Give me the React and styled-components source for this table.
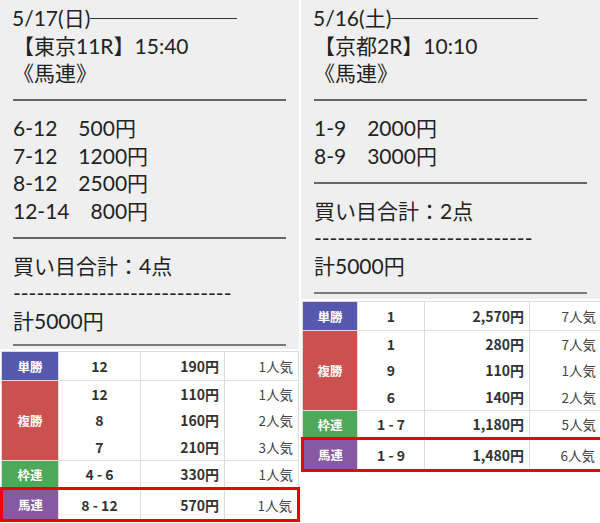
import styled, { createGlobalStyle } from "styled-components";

const GlobalStyle = createGlobalStyle`
  body {
    margin: 0;
    background: #fff;
    font-family: Lato, "Noto Sans CJK JP", sans-serif;
  }
`;

const Page = styled.div`
  width: 600px;
  display: grid;
  grid-template-columns: 299px 299px;
  column-gap: 2px;
  align-items: start;
`;

const Column = styled.div`
  display: flex;
  flex-direction: column;
`;

const Memo = styled.div`
  background: #efefef;
  padding: 4px 13px 2px;
  color: #222;
  font-size: 21px;
`;

const Line = styled.div`
  height: 27.5px;
  line-height: 27.5px;
  white-space: pre;
`;

const TitleLine = styled(Line)`
  display: flex;
  align-items: center;
  margin-left: -1px;
`;

const TitleRule = styled.span`
  width: 147px;
  height: 1px;
  margin-top: 1px;
  background: #333;
`;

const Rule = styled.div`
  height: 27.5px;
  display: flex;
  align-items: center;

  &::after {
    content: "";
    width: 273px;
    height: 2px;
    background: #666;
  }
`;

const EndRule = styled.div`
  height: ${(p) => p.$h}px;
  padding-bottom: ${(p) => p.$pb}px;
  box-sizing: border-box;
  display: flex;
  align-items: flex-end;

  &::after {
    content: "";
    width: 273px;
    height: 2px;
    background: #7a7a7a;
  }
`;

const Table = styled.table`
  margin-top: 2px;
  width: 100%;
  border-collapse: collapse;
  table-layout: fixed;
  background: #fff;
  font-family: "Noto Sans CJK JP", sans-serif;
`;

const Col = styled.col`
  width: ${(p) => p.$w}px;
`;

const Td = styled.td`
  border: 1px solid #ddd;
  padding: 0 5px;
  height: ${(p) => p.$h || 29}px;
  text-align: ${(p) => p.$align || "right"};
  font-size: ${(p) => (p.$pop ? "13.5px" : "14px")};
  font-weight: ${(p) => (p.$pop ? 400 : 700)};
  color: ${(p) => (p.$pop ? "#444" : "#333")};
  vertical-align: middle;
  box-sizing: border-box;

  ${(p) =>
    p.$hl &&
    `
    border-top: 3px solid #e8000b;
    border-bottom: 3px solid #e8000b;
  `}
  ${(p) => p.$hlLeft && `border-left: 3px solid #e8000b;`}
  ${(p) => p.$hlRight && `border-right: 3px solid #e8000b;`}
`;

const Label = styled(Td)`
  background: ${(p) => p.$bg};
  color: #fff;
  text-align: center;
  font-size: 12.5px;
  font-weight: 700;
  padding: 0;
`;

const Stack = styled.div`
  display: flex;
  flex-direction: column;
`;

const StackLine = styled.div`
  height: 26.3px;
  line-height: 26.3px;
`;

const COLORS = {
  単勝: "#5558ad",
  複勝: "#cb5151",
  枠連: "#4da859",
  馬連: "#8759a2",
};

const DASHES = "----------------------------";

const races = [
  {
    date: "5/17(日)",
    race: "【東京11R】15:40",
    type: "《馬連》",
    bets: ["6-12　500円", "7-12　1200円", "8-12　2500円", "12-14　800円"],
    total: "買い目合計：4点",
    sum: "計5000円",
    tail: { h: 13, pb: 1 },
    cols: [57, 82, 84, 74],
    results: [
      { kind: "単勝", rows: [["12", "190円", "1人気"]] },
      {
        kind: "複勝",
        rows: [
          ["12", "110円", "1人気"],
          ["8", "160円", "2人気"],
          ["7", "210円", "3人気"],
        ],
      },
      { kind: "枠連", rows: [["4 - 6", "330円", "1人気"]] },
      { kind: "馬連", rows: [["8 - 12", "570円", "1人気"]], hit: true },
    ],
  },
  {
    date: "5/16(土)",
    race: "【京都2R】10:10",
    type: "《馬連》",
    bets: ["1-9　2000円", "8-9　3000円"],
    total: "買い目合計：2点",
    sum: "計5000円",
    tail: { h: 18, pb: 3 },
    cols: [55, 67, 105, 72],
    results: [
      { kind: "単勝", rows: [["1", "2,570円", "7人気"]] },
      {
        kind: "複勝",
        rows: [
          ["1", "280円", "7人気"],
          ["9", "110円", "1人気"],
          ["6", "140円", "2人気"],
        ],
      },
      { kind: "枠連", rows: [["1 - 7", "1,180円", "5人気"]] },
      { kind: "馬連", rows: [["1 - 9", "1,480円", "6人気"]], hit: true },
    ],
  },
];

function ResultRow({ result }) {
  const { kind, rows, hit } = result;
  if (rows.length > 1) {
    return (
      <tr>
        <Label $bg={COLORS[kind]} $h={80}>
          {kind}
        </Label>
        {[0, 1, 2].map((i) => (
          <Td key={i} $align={i === 0 ? "center" : "right"} $pop={i === 2} $h={80}>
            <Stack>
              {rows.map((r, j) => (
                <StackLine key={j}>{r[i]}</StackLine>
              ))}
            </Stack>
          </Td>
        ))}
      </tr>
    );
  }
  const [num, pay, pop] = rows[0];
  const h = hit ? 32 : kind === "枠連" ? 28 : 29;
  return (
    <tr>
      <Label $bg={COLORS[kind]} $h={h} $hl={hit} $hlLeft={hit}>
        {kind}
      </Label>
      <Td $align="center" $h={h} $hl={hit}>
        {num}
      </Td>
      <Td $h={h} $hl={hit}>
        {pay}
      </Td>
      <Td $pop $h={h} $hl={hit} $hlRight={hit}>
        {pop}
      </Td>
    </tr>
  );
}

function RaceColumn({ data }) {
  return (
    <Column>
      <Memo>
        <TitleLine>
          {data.date}
          <TitleRule />
        </TitleLine>
        <Line>{data.race}</Line>
        <Line>{data.type}</Line>
        <Rule />
        {data.bets.map((b) => (
          <Line key={b}>{b}</Line>
        ))}
        <Rule />
        <Line>{data.total}</Line>
        <Line>{DASHES}</Line>
        <Line>{data.sum}</Line>
        <EndRule $h={data.tail.h} $pb={data.tail.pb} />
      </Memo>
      <Table>
        <colgroup>
          {data.cols.map((w, i) => (
            <Col key={i} $w={w} />
          ))}
        </colgroup>
        <tbody>
          {data.results.map((r) => (
            <ResultRow key={r.kind} result={r} />
          ))}
        </tbody>
      </Table>
    </Column>
  );
}

export default function App() {
  return (
    <>
      <GlobalStyle />
      <Page>
        {races.map((r) => (
          <RaceColumn key={r.date} data={r} />
        ))}
      </Page>
    </>
  );
}
